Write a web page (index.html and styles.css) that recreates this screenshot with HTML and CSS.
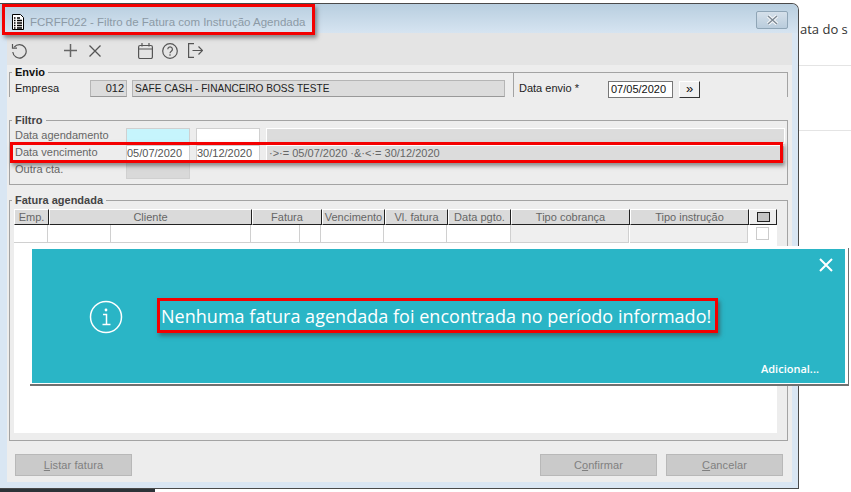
FILE: index.html
```html
<!DOCTYPE html>
<html lang="pt-BR">
<head>
<meta charset="utf-8">
<title>FCRFF022</title>
<link rel="stylesheet" href="styles.css">
</head>
<body>
<div class="desktop">
  <div class="window">
    <div class="titlebar">
      <svg class="docicon" width="12" height="16" viewBox="0 0 12 16"><path d="M.5.5h8l3 3v12H.5z" fill="#fff" stroke="#000"/><path d="M2 4h1.500M5 4h3M2 6.500h1.500M5 6.500h5M2 9h1.500M5 9h5M2 11.500h1.500M5 11.500h5M2 14h1.500M5 14h5" stroke="#000" stroke-width="1.500"/></svg>
      <span class="title">FCRFF022 - Filtro de Fatura com Instrução Agendada</span>
      <div class="closebtn"><svg width="13" height="10" viewBox="0 0 13 10"><path d="M2 1l9 8M11 1L2 9" stroke="#f4f6f8" stroke-width="3.600"/><path d="M2 1l9 8M11 1L2 9" stroke="#7b8792" stroke-width="1.400"/></svg></div>
    </div>
    <div class="content">
      <div class="toolbar">
        <svg class="tool t-undo" width="17" height="16" viewBox="0 0 17 16"><path d="M3.200 4.200A6.700 6.700 0 1 1 1.800 9" fill="none" stroke="#555" stroke-width="1.200"/><path d="M1.500 1v4.200h4.500" fill="none" stroke="#555" stroke-width="1.200"/></svg>
        <svg class="tool t-plus" width="13" height="13" viewBox="0 0 13 13"><path d="M6.500 0v13M0 6.500h13" stroke="#666" stroke-width="1.500"/></svg>
        <svg class="tool t-x" width="12" height="12" viewBox="0 0 12 12"><path d="M.5.500l11 11M11.500.500l-11 11" stroke="#555" stroke-width="1.300"/></svg>
        <svg class="tool t-cal" width="15" height="16" viewBox="0 0 15 16"><rect x=".6" y="2.500" width="13.800" height="13" rx="1.500" fill="none" stroke="#555" stroke-width="1.200"/><path d="M.6 6h13.800M4 0v3.500M11 0v3.500" stroke="#555" stroke-width="1.200"/></svg>
        <svg class="tool t-help" width="16" height="16" viewBox="0 0 16 16"><circle cx="8" cy="8" r="7.300" fill="none" stroke="#555" stroke-width="1.200"/><path d="M5.800 6.200a2.300 2.300 0 1 1 3.500 2c-.9.600-1.300 1-1.300 2" fill="none" stroke="#555" stroke-width="1.200"/><path d="M8 11.300v1.500" stroke="#555" stroke-width="1.200"/></svg>
        <svg class="tool t-exit" width="15" height="15" viewBox="0 0 15 15"><path d="M6 .6H.6v13.800H6M4.500 7.500h10M10.500 3.500l4 4-4 4" fill="none" stroke="#555" stroke-width="1.200"/></svg>
      </div>
      <div class="panel">
        <fieldset class="group envio">
          <legend>Envio</legend>
          <div class="envio-row">
            <span class="lbl lbl-empresa">Empresa</span>
            <span class="ro code">012</span>
            <span class="ro name">SAFE CASH - FINANCEIRO BOSS TESTE</span>
            <div class="envio-date">
              <span class="lbl lbl-envio">Data envio *</span>
              <span class="dateinput">07/05/2020</span>
              <span class="morebtn">»</span>
            </div>
          </div>
        </fieldset>
        <fieldset class="group filtro">
          <legend>Filtro</legend>
          <div class="frow">
            <span class="lbl flabel">Data agendamento</span>
            <span class="fi cyan"></span>
            <span class="fi blank"></span>
            <span class="fi wide"></span>
          </div>
          <div class="frow">
            <span class="lbl flabel">Data vencimento</span>
            <span class="fi blank">05/07/2020</span>
            <span class="fi blank">30/12/2020</span>
            <span class="fi wide">·&gt;·= 05/07/2020 ·&amp;·&lt;·= 30/12/2020</span>
          </div>
          <div class="frow">
            <span class="lbl flabel">Outra cta.</span>
            <span class="fi grey tall"></span>
          </div>
        </fieldset>
        <fieldset class="group fatura">
          <legend>Fatura agendada</legend>
          <div class="tbl">
            <div class="thead">
              <span class="th c1">Emp.</span>
              <span class="th c2">Cliente</span>
              <span class="th c3">Fatura</span>
              <span class="th c4">Vencimento</span>
              <span class="th c5">Vl. fatura</span>
              <span class="th c6">Data pgto.</span>
              <span class="th c7">Tipo cobrança</span>
              <span class="th c8">Tipo instrução</span>
              <span class="th c9"><i class="boxhead"></i></span>
            </div>
            <div class="tbody">
              <span class="td d1"></span><span class="td d2"></span><span class="td d3"></span><span class="td d4"></span><span class="td d5"></span><span class="td d6"></span><span class="td d7"></span><span class="td d8"></span><span class="td d9 shade"></span><span class="td d10 shade"></span>
              <i class="check"></i>
            </div>
          </div>
        </fieldset>
        <div class="actions">
          <span class="btn"><u>L</u>istar fatura</span>
          <span class="btn push">C<u>o</u>nfirmar</span>
          <span class="btn"><u>C</u>ancelar</span>
        </div>
      </div>
    </div>
  </div>
  <div class="behind">
    <p class="behind-text">ata do s</p>
    <div class="rule r1"></div>
    <div class="rule r2"></div>
  </div>
</div>
<div class="taskstrip"></div>

<div class="toast">
  <svg class="toast-i" width="34" height="34" viewBox="0 0 34 34"><circle cx="17" cy="17" r="15.500" fill="none" stroke="#fff" stroke-width="1.500"/><circle cx="17" cy="10" r="1.400" fill="#fff"/><path d="M14 14.500h3.500v10M13.500 24.500h8" fill="none" stroke="#fff" stroke-width="1.500"/></svg>
  <span class="toast-msg">Nenhuma fatura agendada foi encontrada no período informado!</span>
  <svg class="toast-x" width="14" height="14" viewBox="0 0 14 14"><path d="M1 1l12 12M13 1L1 13" stroke="#fff" stroke-width="2"/></svg>
  <span class="toast-more">Adicional...</span>
</div>

<div class="mark m-title"></div>
<div class="mark m-row"></div>
<div class="mark m-msg"></div>
</body>
</html>
```
FILE: styles.css
```css
* { box-sizing: border-box; }
html, body { margin: 0; padding: 0; }
body {
  position: relative;
  width: 851px;
  height: 492px;
  overflow: hidden;
  background: #fff;
  font-family: "Liberation Sans", Arial, sans-serif;
  font-size: 11px;
  color: #555;
}
.desktop { display: flex; height: 489px; padding-top: 3px; }
.window {
  width: 799px;
  height: 486px;
  flex: none;
  display: flex;
  flex-direction: column;
  border: 1px solid #4a4a4a;
  border-left: none;
  border-top-right-radius: 7px;
  background: #d9e6f3;
  padding: 0 6px 6px 7px;
}
.titlebar {
  height: 29px;
  flex: none;
  margin: 0 -6px 0 -7px;
  padding: 0 10px 0 12px;
  display: flex;
  align-items: center;
  background: linear-gradient(#b8cedf, #d6e4f1);
  border-top-right-radius: 6px;
}
.docicon { margin-top: 6px; flex: none; }
.title {
  margin: 7px 0 0 6px;
  color: #8c9aa6;
  font-size: 11.5px;
  white-space: nowrap;
}
.closebtn {
  margin: 3px 0 0 auto;
  width: 32px;
  height: 18px;
  border: 1px solid #8fa5b6;
  border-radius: 2px;
  background: linear-gradient(#d5e0ea, #b9ccdc);
  display: flex;
  align-items: center;
  justify-content: center;
}
.content { flex: 1; display: flex; flex-direction: column; min-height: 0; background: #ededed; }
.toolbar { height: 32px; flex: none; background: #e4e4e4; display: flex; align-items: center; padding-left: 4px; }
.tool { flex: none; margin-top: 3px; }
.t-plus { margin-left: 36px; }
.t-x { margin-left: 12px; }
.t-cal { margin-left: 37px; }
.t-help { margin-left: 9px; }
.t-exit { margin-left: 10px; }
.panel { flex: 1; display: flex; flex-direction: column; padding: 0 4px 0 2px; }
.group {
  margin: 0;
  padding: 0 5px;
  min-width: 0;
  border: 1px solid #a3a3a3;
  border-bottom: none;
}
.group legend {
  margin-left: -3px;
  padding: 0 3px;
  font-weight: bold;
  font-size: 11px;
  line-height: 14px;
  color: #444;
}
.envio legend { color: #111; }
.envio { height: 32px; flex: none; }
.filtro { height: 72px; margin-top: 16px; border-bottom: 1px solid #a3a3a3; flex: none; }
.fatura { height: 248px; margin-top: 8px; border-bottom: 1px solid #a3a3a3; padding: 0 9px 7px 4px; flex: none; }
.fatura legend { margin-left: -2px; }
.lbl { white-space: nowrap; }
.envio-row { display: flex; align-items: flex-start; height: 18px; margin-top: 1px; }
.lbl-empresa { width: 75px; color: #222; line-height: 17px; }
.ro {
  height: 17px;
  background: #dcdcdc;
  border: 1px solid #b5b5b5;
  border-bottom-color: #999;
  color: #222;
  line-height: 15px;
  padding: 0 2px;
}
.code { width: 37px; text-align: right; }
.name { width: 373px; margin-left: 5px; font-size: 10.1px; }
.envio-date { display: flex; align-items: flex-start; height: 25px; margin: -8px 0 0 8px; padding: 9px 0 0 5px; border-left: 1px solid #a3a3a3; }
.lbl-envio { width: 89px; color: #222; line-height: 15px; }
.dateinput { width: 65px; height: 17px; background: #fff; border: 1px solid #777; color: #111; line-height: 15px; padding-left: 2px; }
.morebtn {
  margin-left: 6px;
  width: 21px;
  height: 17px;
  background: #f0f0f0;
  border: 1px solid;
  border-color: #fff #333 #333 #fff;
  color: #111;
  font-size: 13px;
  line-height: 13px;
  text-align: center;
}
.frow { display: flex; height: 16px; gap: 6px; margin-top: 1px; }
.flabel { flex: none; width: 111px; line-height: 14px; color: #666; margin-right: -6px; }
.fi { flex: none; width: 64px; height: 16px; border: 1px solid #d0d0d0; line-height: 15px; white-space: nowrap; overflow: hidden; }
.cyan { background: #c6f5fd; }
.blank { background: #fff; color: #555; }
.grey { background: #d9d9d9; }
.tall { height: 17px; }
.wide { width: 519px; background: #dcdcdc; border-color: #fff; color: #666; padding-left: 2px; }
.tbl { height: 224px; background: #fff; margin-top: 2px; width: 763px; }
.thead { display: flex; height: 16px; background: #ededed; }
.th {
  background: #dadada;
  border-top: 1px solid #fff;
  border-left: 1px solid #fff;
  border-right: 1px solid #222;
  border-bottom: 1px solid #222;
  text-align: center;
  color: #666;
  line-height: 14px;
  white-space: nowrap;
  overflow: hidden;
}
.c1 { width: 35px; } .c2 { width: 203px; } .c3 { width: 70px; } .c4 { width: 63px; } .c5 { width: 63px; }
.c6 { width: 63px; } .c7 { width: 119px; } .c8 { width: 119px; } .c9 { width: 28px; background: #ededed; }
.boxhead { display: block; width: 13px; height: 10px; margin: 2px auto 0; background: #c4c4c4; border: 1px solid #222; }
.tbody { display: flex; height: 18px; align-items: stretch; }
.td { border-right: 1px solid #d0d0d0; border-bottom: 1px solid #d0d0d0; }
.d1 { width: 34px; } .d2 { width: 63px; } .d3 { width: 140px; } .d4 { width: 49px; } .d5 { width: 21px; }
.d6 { width: 63px; } .d7 { width: 63px; } .d8 { width: 64px; }
.d9 { width: 118px; margin-right: 1px; } .d10 { width: 118px; }
.shade { background: #efefef; }
.check { width: 13px; height: 13px; margin: 2px 0 0 8px; border: 1px solid #ccc; background: #fff; }
.actions { display: flex; gap: 9px; margin-top: 13px; padding: 0 5px 0 6px; }
.push { margin-left: auto; }
.btn {
  width: 117px;
  height: 22px;
  background: #cacaca;
  border: 1px solid #b8b8b8;
  color: #808080;
  text-align: center;
  line-height: 21px;
  letter-spacing: .1px;
}
.behind { flex: 1; min-width: 0; overflow: hidden; }
.behind-text { margin: 17px 0 0 1px; font-family: "Open Sans", sans-serif; font-size: 13px; line-height: 18px; color: #333; white-space: nowrap; }
.rule { height: 1px; background: #e4e4e4; }
.r1 { margin-top: 27px; }
.r2 { margin-top: 64px; }
.taskstrip { width: 155px; height: 3px; background: #2c3338; }

.toast {
  position: absolute;
  left: 29px;
  top: 246px;
  width: 819px;
  height: 138px;
  background: #2ab5c6;
  border: 3px solid #fff;
  border-bottom-width: 1px;
  box-shadow: 1px 2px 0 #707070;
  color: #fff;
}
.toast-i { position: absolute; left: 57px; top: 51px; }
.toast-msg { position: absolute; left: 129px; top: 53px; font-family: "Open Sans", sans-serif; font-size: 18px; letter-spacing: .03px; line-height: 28px; white-space: nowrap; }
.toast-x { position: absolute; left: 787px; top: 9px; }
.toast-more { position: absolute; left: 729px; top: 112px; font-family: "Open Sans", sans-serif; font-weight: 600; font-size: 11px; line-height: 16px; }
.mark { position: absolute; border: 3px solid #f40000; box-shadow: 2px 3px 4px rgba(60, 60, 60, .55); }
.m-title { left: 2px; top: 4px; width: 313px; height: 31px; }
.m-row { left: 10px; top: 142px; width: 773px; height: 21px; }
.m-msg { left: 157px; top: 298px; width: 561px; height: 35px; }
```
